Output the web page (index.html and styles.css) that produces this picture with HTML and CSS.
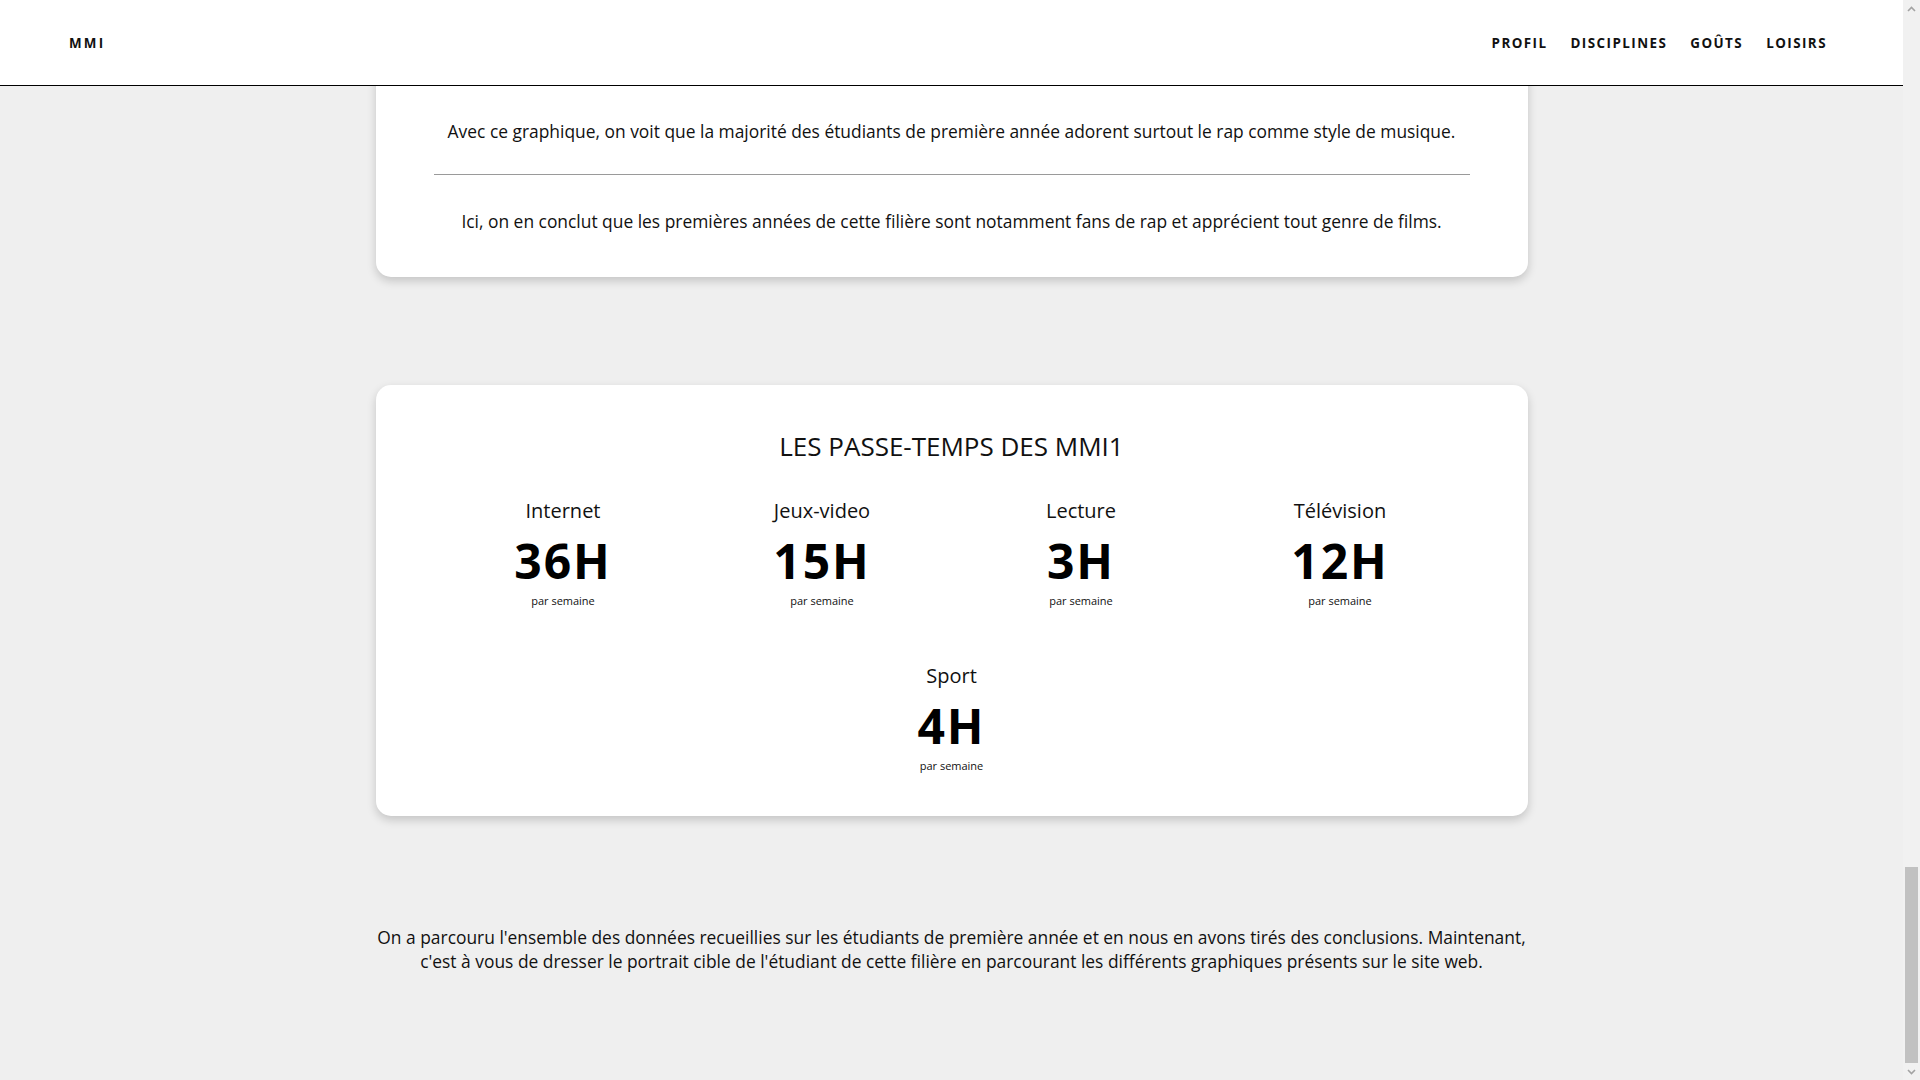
FILE: index.html
```html
<!DOCTYPE html>
<html lang="fr">
<head>
<meta charset="utf-8">
<title>MMI</title>
<link rel="stylesheet" href="styles.css">
</head>
<body>
<div class="window">
  <div class="page">
    <header class="topbar">
      <div class="brand">MMI</div>
      <nav class="nav">
        <a href="#">PROFIL</a>
        <a href="#">DISCIPLINES</a>
        <a href="#">GOÛTS</a>
        <a href="#">LOISIRS</a>
      </nav>
    </header>
    <main class="content">
      <section class="card card-conclusion">
        <p class="text">Avec ce graphique, on voit que la majorité des étudiants de première année adorent surtout le rap comme style de musique.</p>
        <hr class="divider">
        <p class="text">Ici, on en conclut que les premières années de cette filière sont notamment fans de rap et apprécient tout genre de films.</p>
      </section>
      <section class="card card-hobbies">
        <h2 class="card-title">LES PASSE-TEMPS DES MMI1</h2>
        <div class="stats">
          <div class="stat"><div class="stat-label">Internet</div><div class="stat-value">36H</div><div class="stat-unit">par semaine</div></div>
          <div class="stat"><div class="stat-label">Jeux-video</div><div class="stat-value">15H</div><div class="stat-unit">par semaine</div></div>
          <div class="stat"><div class="stat-label">Lecture</div><div class="stat-value">3H</div><div class="stat-unit">par semaine</div></div>
          <div class="stat"><div class="stat-label">Télévision</div><div class="stat-value">12H</div><div class="stat-unit">par semaine</div></div>
          <div class="stat"><div class="stat-label">Sport</div><div class="stat-value">4H</div><div class="stat-unit">par semaine</div></div>
        </div>
      </section>
      <p class="outro">On a parcouru l'ensemble des données recueillies sur les étudiants de première année et en nous en avons tirés des conclusions. Maintenant, c'est à vous de dresser le portrait cible de l'étudiant de cette filière en parcourant les différents graphiques présents sur le site web.</p>
    </main>
  </div>
  <div class="scrollbar">
    <div class="scroll-arrow">
      <svg width="9" height="6" viewBox="0 0 9 6"><path d="M1 5 L4.5 1.5 L8 5" fill="none" stroke="#a3a3a3" stroke-width="1.6"/></svg>
    </div>
    <div class="scroll-track"><div class="scroll-thumb"></div></div>
    <div class="scroll-arrow">
      <svg width="9" height="6" viewBox="0 0 9 6"><path d="M1 1 L4.5 4.5 L8 1" fill="none" stroke="#a3a3a3" stroke-width="1.6"/></svg>
    </div>
  </div>
</div>
</body>
</html>
```
FILE: styles.css
```css
* { box-sizing: border-box; }
html, body { margin: 0; padding: 0; }
body {
  background: #efefef;
  font-family: "Open Sans", "Liberation Sans", sans-serif;
  color: #111;
  overflow: hidden;
}
.window {
  display: flex;
  width: 1920px;
  height: 1080px;
  overflow: hidden;
}
.page {
  position: relative;
  flex: 1;
  height: 1080px;
  overflow: hidden;
}
.topbar {
  position: absolute;
  top: 0;
  left: 0;
  right: 0;
  height: 86px;
  background: #fff;
  border-bottom: 1px solid #000;
  display: flex;
  align-items: center;
  justify-content: space-between;
  padding: 1px 76px 0 69px;
  z-index: 10;
}
.brand {
  font-weight: 700;
  font-size: 13.4px;
  letter-spacing: 2.2px;
  color: #111;
}
.nav {
  display: flex;
  gap: 23px;
}
.nav a {
  color: #111;
  text-decoration: none;
  font-weight: 700;
  font-size: 13.4px;
  letter-spacing: 1.45px;
}
.content {
  width: 1152px;
  margin: 0 auto;
}
.card {
  background: #fff;
  border-radius: 15px;
  box-shadow: 0 4px 10px rgba(0, 0, 0, 0.18);
  padding-left: 58px;
  padding-right: 58px;
}
.card-conclusion {
  padding-top: 118px;
  padding-bottom: 43px;
}
.text {
  margin: 0;
  text-align: center;
  font-size: 17.4px;
  line-height: 26px;
}
.divider {
  border: 0;
  border-top: 1px solid #9a9a9a;
  margin: 30px 0 33px;
}
.card-hobbies {
  margin-top: 108px;
  padding-top: 43px;
  padding-bottom: 43px;
}
.card-title {
  margin: 0 0 34px;
  text-align: center;
  font-weight: 400;
  font-size: 26px;
  line-height: 36px;
}
.stats {
  display: flex;
  flex-wrap: wrap;
  justify-content: center;
  row-gap: 55px;
}
.stat {
  width: 25%;
  text-align: center;
}
.stat-label {
  font-size: 20px;
  line-height: 26px;
}
.stat-value {
  margin-top: 12px;
  font-size: 48px;
  font-weight: 700;
  line-height: 50px;
  letter-spacing: 2px;
  color: #000;
}
.stat-unit {
  margin-top: 7px;
  font-size: 11px;
  line-height: 15px;
}
.outro {
  margin: 110px -4px 0;
  text-align: center;
  font-size: 17.4px;
  line-height: 23.5px;
}
.scrollbar {
  width: 17px;
  height: 1080px;
  background: #f1f1f1;
  display: flex;
  flex-direction: column;
}
.scroll-arrow {
  height: 17px;
  display: flex;
  align-items: center;
  justify-content: center;
}
.scroll-track {
  flex: 1;
  display: flex;
  flex-direction: column;
  justify-content: flex-end;
  padding: 0 2px 0 2px;
}
.scroll-thumb {
  height: 196px;
  background: #c1c1c1;
}
```
